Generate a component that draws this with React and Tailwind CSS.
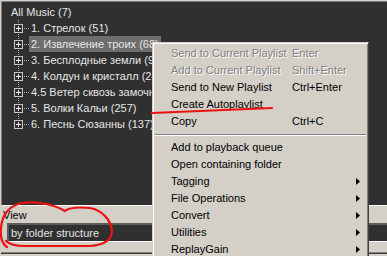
// App.jsx - foobar2000 style album list with context menu
const tree = [
  { label: "1. Стрелок (51)" },
  { label: "2. Извлечение троих (68)", selected: true },
  { label: "3. Бесплодные земли (92)" },
  { label: "4. Колдун и кристалл (24)" },
  { label: "4.5 Ветер сквозь замочную скважину (9)" },
  { label: "5. Волки Кальи (257)" },
  { label: "6. Песнь Сюзанны (137)", last: true },
];

const menu = [
  { label: "Send to Current Playlist", key: "Enter", disabled: true },
  { label: "Add to Current Playlist", key: "Shift+Enter", disabled: true },
  { label: "Send to New Playlist", key: "Ctrl+Enter" },
  { label: "Create Autoplaylist" },
  { label: "Copy", key: "Ctrl+C" },
  { sep: true },
  { label: "Add to playback queue" },
  { label: "Open containing folder" },
  { label: "Tagging", sub: true },
  { label: "File Operations", sub: true },
  { label: "Convert", sub: true },
  { label: "Utilities", sub: true },
  { label: "ReplayGain", sub: true },
  { label: "Properties" },
];

function TreeNode({ label, selected, last }) {
  return (
    <div className="flex h-4 items-center pl-[9px]">
      <svg width="18" height="16" className="shrink-0">
        <path d="M7.5 0V4" stroke="#a8a8a8" strokeDasharray="1 1" />
        {!last && <path d="M7.5 14V16" stroke="#a8a8a8" strokeDasharray="1 1" />}
        <path d="M13 8.5H18" stroke="#a8a8a8" strokeDasharray="1 1" />
        <rect x="3.5" y="4.5" width="8" height="8" fill="#303030" stroke="#c8c8c8" />
        <path d="M5 8.5H10M7.5 6V11" stroke="#ececec" />
      </svg>
      <span className={`whitespace-nowrap px-[2px] leading-4 ${selected ? "bg-[#6e6e6e]" : ""}`}>
        {label}
      </span>
    </div>
  );
}

function MenuItem({ label, shortcut, disabled, sub }) {
  return (
    <div
      className={`flex h-[17px] items-center pl-[18px] pr-[8px] ${
        disabled ? "text-[#808080] [text-shadow:1px_1px_0_#fff]" : "text-black"
      }`}
    >
      <span className="w-[121px] shrink-0 whitespace-nowrap">{label}</span>
      <span className="whitespace-nowrap">{shortcut}</span>
      {sub && (
        <svg width="4" height="7" className="ml-auto">
          <path d="M0 0L4 3.5L0 7Z" fill="#000" />
        </svg>
      )}
    </div>
  );
}

export default function App() {
  return (
    <div className="relative h-[256px] w-[387px] overflow-hidden bg-[#d4d0c8] pl-px pt-px font-['Liberation_Sans',Arial,sans-serif] text-[11px]">
      {/* Album list tree */}
      <div className="h-[205px] overflow-hidden border-b border-l border-t border-b-white border-l-[#808080] border-t-[#808080] bg-[#303030] pt-[2px] text-[#e6e6e6]">
        <div className="flex h-4 items-center pl-[7px]">
          <span className="px-[2px] leading-4">All Music (7)</span>
        </div>
        {tree.map((n) => (
          <TreeNode key={n.label} {...n} />
        ))}
      </div>

      {/* View selector */}
      <div className="h-[17px] pl-[2px] pt-[2px] leading-[15px] text-black">View</div>
      <div className="ml-[6px] h-[19px] border-b border-l-2 border-t-2 border-b-white border-l-[#5c5c5c] border-t-[#5c5c5c] bg-[#303030] pl-[2px] leading-4 text-[#e6e6e6]">
        by folder structure
      </div>
      <div className="mt-[10px] h-[2px] border-t border-[#808080] bg-[#404040]" />

      {/* Context menu */}
      <div className="absolute left-[152px] top-[42px] h-[240px] w-[217px] border border-b-[#404040] border-l-[#d4d0c8] border-r-[#404040] border-t-[#d4d0c8] bg-[#d4d0c8] pt-[2px] shadow-[inset_1px_1px_0_#fff,inset_-1px_-1px_0_#808080]">
        {menu.map((m, i) =>
          m.sep ? (
            <div key={i} className="h-[9px] pt-[4px]">
              <div className="mx-[2px] h-[2px] border-t border-[#808080] bg-white" />
            </div>
          ) : (
            <MenuItem key={i} label={m.label} shortcut={m.key} disabled={m.disabled} sub={m.sub} />
          )
        )}
      </div>

      {/* Red annotations */}
      <svg width="387" height="256" className="pointer-events-none absolute left-0 top-0">
        <path
          d="M152 113C190 111.5 230 110 272 108"
          fill="none"
          stroke="#ee1111"
          strokeWidth="2.2"
          strokeLinecap="round"
        />
        <path
          d="M7 247C2 244 0 236 1 228C2 216 8 206 22 203C38 201 55 205 65 211C70 207 80 207 90 208C102 210 111 220 112 231C112 241 102 245 90 246L25 246C15 246 9 244 6 241"
          fill="none"
          stroke="#ee1111"
          strokeWidth="2.2"
          strokeLinecap="round"
        />
      </svg>
    </div>
  );
}
